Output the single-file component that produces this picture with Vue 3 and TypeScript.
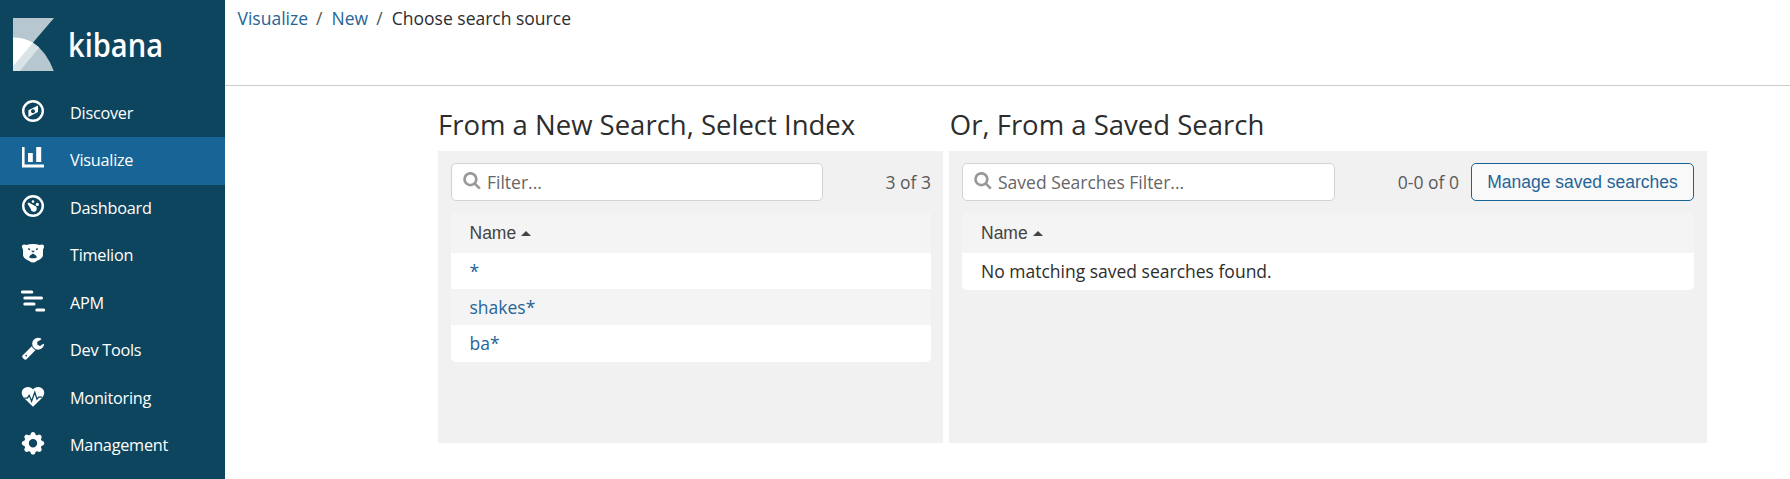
<script setup lang="ts">
interface NavItem {
  label: string
  icon: string
  active?: boolean
}

const navItems: NavItem[] = [
  { label: 'Discover', icon: 'compass' },
  { label: 'Visualize', icon: 'chart', active: true },
  { label: 'Dashboard', icon: 'gauge' },
  { label: 'Timelion', icon: 'bear' },
  { label: 'APM', icon: 'apm' },
  { label: 'Dev Tools', icon: 'wrench' },
  { label: 'Monitoring', icon: 'heart' },
  { label: 'Management', icon: 'cog' },
]

const indices: string[] = ['*', 'shakes*', 'ba*']
const teeth: number[] = [0, 45, 90, 135, 180, 225, 270, 315]
</script>

<template>
  <div class="app">
    <nav class="sidebar">
      <div class="brand">
        <svg class="brand-mark" viewBox="0 0 41 53">
          <path d="M0 0H41L20 24.6Q33 33 40.8 53H0Z" fill="#b6c7cf" />
          <path d="M0 19.4Q14.6 19.4 26.2 29.6L7 53H0Z" fill="#dae3e7" />
          <path d="M0 19.4Q11 19.4 20 24.6L0 48.3Z" fill="#fff" />
        </svg>
        <svg class="brand-name" viewBox="0 0 120 54">
          <text x="0" y="39" textLength="95" lengthAdjust="spacingAndGlyphs">kibana</text>
        </svg>
      </div>
      <a v-for="item in navItems" :key="item.label" class="nav-item" :class="{ active: item.active }">
        <svg class="nav-icon" viewBox="0 0 22 22">
          <template v-if="item.icon === 'compass'">
            <circle cx="11" cy="11" r="9.8" fill="none" stroke="#fff" stroke-width="2.4" />
            <path fill-rule="evenodd" d="M16 5.4V12L6.4 17V10.2ZM11 9.3a2 2 0 1 0 .01 0Z" fill="#fff" />
          </template>
          <path v-else-if="item.icon === 'chart'" d="M0 0H2.6V17.4H22V20.4H0ZM6 6H10.8V15H6ZM14.2 0H19.2V15H14.2Z" fill="#fff" />
          <template v-else-if="item.icon === 'gauge'">
            <circle cx="11" cy="11" r="9.8" fill="none" stroke="#fff" stroke-width="2.4" />
            <circle cx="11" cy="6.6" r="1.3" fill="#fff" />
            <circle cx="15.3" cy="9.4" r="1.6" fill="#fff" />
            <path d="M5.5 8.7Q5.7 7.2 7.2 7.8L12.6 10.8A3 3 0 1 1 8.8 14Z" fill="#fff" />
          </template>
          <template v-else-if="item.icon === 'bear'">
            <path d="M.1 3.4Q1.5 1.9 4.2 2.9Q11 1.3 17.8 2.9Q20.5 1.9 21.9 3.4Q22.4 5.6 21 7.6L20.9 14Q18.9 17.8 15 18.7Q13 20.6 11 20.6Q9 20.6 7 18.7Q3.1 17.8 1.1 14L1 7.6Q-.4 5.6 .1 3.4Z" fill="#fff" />
            <path d="M6.2 6.6L8 7.6M15.8 6.6L14 7.6" stroke="#0e455e" stroke-width="1.4" />
            <path d="M9.2 8.8H12.8L11.6 10.3H10.4ZM7 15.2Q7.8 13 9.6 12.4L11 11.6L12.4 12.4Q14.2 13 15 15.2L13 16.3H9Z" fill="#0e455e" />
          </template>
          <path v-else-if="item.icon === 'apm'" class="bars" d="M.4 2H9.8M2.8 8H19.5M2.8 14H12M14.8 20H21.7" />
          <path v-else-if="item.icon === 'wrench'" transform="translate(-.9 -.9) scale(.0133)" d="M448 1472q0-26-19-45t-45-19-45 19-19 45 19 45 45 19 45-19 19-45zm644-420l-682 682q-37 37-90 37-52 0-91-37l-106-108q-38-36-38-90 0-53 38-91l681-681q39 98 114.5 173.5t173.5 114.5zm634-435q0 39-23 106-47 134-164.5 217.5t-258.5 83.5q-185 0-316.5-131.5t-131.5-316.5 131.5-316.5 316.5-131.5q58 0 121.5 16.5t107.5 46.5q16 11 16 28t-16 28l-293 169v224l193 107q5-3 79-48.5t135.5-81 70.5-35.5q15 0 23.5 10t8.5 25z" fill="#fff" />
          <template v-else-if="item.icon === 'heart'">
            <path d="M11 21.8L2 12.9C-3 6.9 1.2 1.9 5.7 1.9C8.2 1.9 10 2.9 11 4.5C12 2.9 13.8 1.9 16.3 1.9C20.8 1.9 25 6.9 20 12.9Z" fill="#fff" />
            <path d="M2.2 13.2H5.3L7.2 10.3L9.6 16.2L12.8 7.2L15 14.1L16.5 12.2H20" fill="none" stroke="#0e455e" stroke-width="1.3" />
          </template>
          <template v-else>
            <circle cx="11" cy="11.3" r="6.5" fill="none" stroke="#fff" stroke-width="4.6" />
            <path v-for="angle in teeth" :key="angle" :transform="`translate(0 .3) rotate(${angle} 11 11)`" d="M7.4 4.5L9.2 .4Q11 -1 12.8 .4L14.6 4.5Z" fill="#fff" />
          </template>
        </svg>
        <span class="nav-label">{{ item.label }}</span>
      </a>
    </nav>

    <main class="content">
      <header class="topbar">
        <a class="crumb-visualize">Visualize</a><i>/</i><a class="crumb-new">New</a><i>/</i><span class="crumb-current">Choose search source</span>
      </header>

      <div class="columns">
        <section class="column index-column">
          <h2 class="title-index">From a New Search, Select Index</h2>
          <div class="panel">
            <div class="toolbar">
              <div class="search">
                <svg viewBox="0 0 18 18"><circle cx="7.4" cy="7.2" r="5.9" /><path d="M11.6 11.4L16.8 16.6" /></svg>
                <span class="hint-filter">Filter...</span>
              </div>
              <span class="count">3 of 3</span>
            </div>
            <div class="table">
              <div class="table-head"><span>Name</span><b class="caret"></b></div>
              <div v-for="name in indices" :key="name" class="row"><a>{{ name }}</a></div>
            </div>
          </div>
        </section>

        <section class="column saved-column">
          <h2 class="title-saved">Or, From a Saved Search</h2>
          <div class="panel">
            <div class="toolbar">
              <div class="search">
                <svg viewBox="0 0 18 18"><circle cx="7.4" cy="7.2" r="5.9" /><path d="M11.6 11.4L16.8 16.6" /></svg>
                <span class="hint-saved">Saved Searches Filter...</span>
              </div>
              <div class="actions">
                <span class="count">0-0 of 0</span>
                <button type="button">Manage saved searches</button>
              </div>
            </div>
            <div class="table">
              <div class="table-head"><span>Name</span><b class="caret"></b></div>
              <div class="row"><span class="empty">No matching saved searches found.</span></div>
            </div>
          </div>
        </section>
      </div>
    </main>
  </div>
</template>

<style>
body {
  margin: 0;
  overflow: hidden;
  background: #fff;
}
</style>

<style scoped>
.app {
  display: flex;
  height: 479px;
  font-family: "Open Sans", sans-serif;
  font-size: 17.5px;
  color: #2d2d2d;
}

.sidebar {
  flex: none;
  width: 225px;
  background: #0e455e;
}

.brand {
  display: flex;
  height: 71.5px;
  padding: 18px 0 0 13px;
}

.brand-mark {
  width: 41px;
  height: 53px;
}

.brand-name {
  width: 120px;
  height: 54px;
  margin-left: 13.5px;
  overflow: visible;
}

.brand-name text {
  font: 600 32px "Open Sans", sans-serif;
  fill: #fff;
}

.nav-item {
  display: flex;
  box-sizing: border-box;
  height: 47.5px;
  padding-left: 22px;
  color: #fff;
}

.nav-item.active {
  background: #166596;
}

.nav-icon {
  width: 22px;
  height: 22px;
  margin-top: 10.3px;
  overflow: visible;
}

.bars {
  fill: none;
  stroke: #fff;
  stroke-width: 3;
  stroke-linecap: round;
}

.nav-label {
  margin-left: 26px;
  font-size: 16.25px;
  letter-spacing: -0.25px;
  line-height: 47.5px;
}

.content {
  flex: 1;
}

.topbar {
  display: flex;
  box-sizing: border-box;
  height: 86px;
  padding: 4.5px 0 0 12.5px;
  border-bottom: 1px solid #ccc;
  line-height: 26px;
}

.topbar i {
  width: 23.6px;
  box-sizing: border-box;
  padding-left: 8px;
  font-style: normal;
  color: #555;
}

.topbar a,
.row a {
  color: #266498;
}

.columns {
  display: flex;
  gap: 6px;
  padding: 20px 0 0 213px;
}

.index-column {
  width: 505px;
}

.saved-column {
  width: 758px;
}

h2 {
  margin: 0;
  height: 45px;
  font-size: 27.5px;
  font-weight: 400;
  line-height: 37px;
  white-space: nowrap;
}

.title-saved {
  text-indent: 0.8px;
}

.panel {
  box-sizing: border-box;
  height: 292px;
  padding: 12px 12px 0 13px;
  background: #f1f1f1;
}

.saved-column .panel {
  padding-right: 13px;
}

.toolbar {
  display: flex;
  align-items: center;
  justify-content: space-between;
  height: 38px;
}

.search {
  display: flex;
  align-items: center;
  box-sizing: border-box;
  width: 372px;
  height: 38px;
  padding-left: 11px;
  border: 1px solid #d3d3d3;
  border-radius: 5px;
  background: #fff;
  color: #666;
}

.saved-column .search {
  width: 373px;
}

.search svg {
  width: 18px;
  height: 18px;
  margin: 0 6px 2px 0;
  fill: none;
  stroke: #999;
  stroke-width: 2.7;
}

.count {
  color: #5a5a5a;
}

.actions {
  display: flex;
  align-items: center;
  gap: 12px;
}

button {
  width: 223px;
  height: 38px;
  padding: 0;
  border: 1px solid #166596;
  border-radius: 5px;
  background: #f9f9f9;
  color: #266498;
  font: 17.5px "Liberation Sans", Arial, sans-serif;
  white-space: nowrap;
}

.table {
  margin-top: 12px;
  overflow: hidden;
  border-radius: 5px;
  background: #fff;
}

.table-head {
  display: flex;
  align-items: center;
  height: 40px;
  padding-left: 18.5px;
  background: #f4f4f4;
  color: #444;
  font-family: "Liberation Sans", Arial, sans-serif;
}

.caret {
  width: 0;
  height: 0;
  margin-left: 5px;
  border: 5.5px solid transparent;
  border-top: 0;
  border-bottom: 5.5px solid #444;
}

.row {
  height: 36px;
  padding-left: 18.5px;
  line-height: 36px;
}

.saved-column .table-head,
.saved-column .row {
  padding-left: 19px;
}

.row:last-child {
  height: 37px;
}

.row:nth-child(odd) {
  background: #f4f4f4;
}
</style>
